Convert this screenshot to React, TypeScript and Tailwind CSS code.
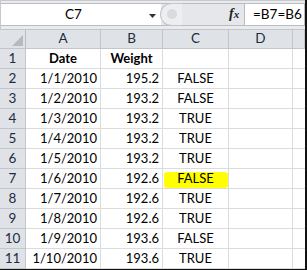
import React from "react";

const rows: [string, string, string, string][] = [
  ["1", "Date", "Weight", ""],
  ["2", "1/1/2010", "195.2", "FALSE"],
  ["3", "1/2/2010", "193.2", "FALSE"],
  ["4", "1/3/2010", "193.2", "TRUE"],
  ["5", "1/4/2010", "193.2", "TRUE"],
  ["6", "1/5/2010", "193.2", "TRUE"],
  ["7", "1/6/2010", "192.6", "FALSE"],
  ["8", "1/7/2010", "192.6", "TRUE"],
  ["9", "1/8/2010", "192.6", "TRUE"],
  ["10", "1/9/2010", "193.6", "FALSE"],
  ["11", "1/10/2010", "193.6", "TRUE"],
];

const cols = "grid-cols-[26px_75px_62px_66px_64px_12px]";

export default function App() {
  return (
    <div
      className="w-[307px] h-[270px] bg-white overflow-hidden relative text-[#000]"
      style={{ fontFamily: "Lato, 'Open Sans', sans-serif" }}
    >
      <div className="w-[305px] h-[269px] flex flex-col">
        {/* formula bar */}
        <div className="h-[29px] bg-[#e9ebee] border-t border-l border-[#c6c9ce] flex items-start pt-[2px]">
          <div className="w-[160px] h-[23px] bg-white border-y border-[#b9bcc1] flex items-center relative">
            <span className="w-[145px] text-center text-[13.5px] leading-none">C7</span>
            <svg width="8" height="4" viewBox="0 0 8 4" className="absolute left-[148px] top-[10px]">
              <path d="M0 0 H7 L3.5 4 Z" fill="#333" />
            </svg>
          </div>
          <div className="relative h-[23px] w-[83px] bg-[#e6e7ea] border-y border-[#b9bcc1] flex items-center">
            <div className="absolute -left-[1px] top-[-1px] w-[22px] h-[23px] rounded-l-full bg-[#eceef0] border-l border-y border-[#c2c5ca]" />
            <div className="absolute left-[6px] top-[5px] w-[10px] h-[10px] rounded-full bg-[#d9dbdf]" />
            <span
              className="absolute left-[68px] top-[3px] text-[14px] italic font-bold text-[#222] leading-none"
              style={{ fontFamily: "'Liberation Serif', serif" }}
            >
              f<span className="text-[11px]">x</span>
            </span>
          </div>
          <div className="h-[23px] flex-1 bg-white border border-[#b9bcc1] flex items-center pl-[8px] text-[13.5px] leading-none">
            =B7=B6
          </div>
        </div>
        {/* column header */}
        <div className={`grid ${cols} h-[20px] bg-[#dfe3e8] border-y border-[#c2c5ca]`}>
          <div className="relative border-r border-[#b9bdc3]">
            <svg width="11" height="11" viewBox="0 0 11 11" className="absolute right-[2px] bottom-[2px]">
              <path d="M11 0 V11 H0 Z" fill="#b6bac0" />
            </svg>
          </div>
          {["A", "B", "C", "D", ""].map((c, i) => (
            <div
              key={i}
              className="border-r border-[#c2c5ca] flex items-center justify-center text-[13.5px] leading-none text-[#1e2b3c]"
            >
              {c}
            </div>
          ))}
        </div>
        {rows.map(([n, a, b, c]) => (
          <div key={n} className={`grid ${cols} h-[20px]`}>
            <div className="bg-[#dfe3e8] border-r border-b border-[#c2c5ca] flex items-center justify-center text-[13.5px] leading-none text-[#1e2b3c]">
              {n}
            </div>
            <div
              className={`border-r border-b border-[#dadcdd] flex items-center text-[13px] leading-none ${
                n === "1" ? "justify-center font-bold" : "justify-end pr-[3px]"
              }`}
            >
              {a}
            </div>
            <div
              className={`border-r border-b border-[#dadcdd] flex items-center text-[13px] leading-none ${
                n === "1" ? "justify-center font-bold" : "justify-end pr-[3px]"
              }`}
            >
              {b}
            </div>
            <div className="border-r border-b border-[#dadcdd] flex items-center justify-center text-[13px] leading-none relative">
              {n === "7" && (
                <div className="absolute left-[1px] right-[0px] top-[3px] bottom-0 bg-[#ffff00] rounded-[3px]" />
              )}
              <span className="relative">{c}</span>
            </div>
            <div className="border-r border-b border-[#dadcdd]" />
            <div className="border-b border-[#dadcdd]" />
          </div>
        ))}
      </div>
      <div className="absolute right-0 top-0 w-[2px] h-[270px] bg-[#111]" />
      <div className="absolute left-0 bottom-0 w-[307px] h-[1px] bg-[#111]" />
    </div>
  );
}
